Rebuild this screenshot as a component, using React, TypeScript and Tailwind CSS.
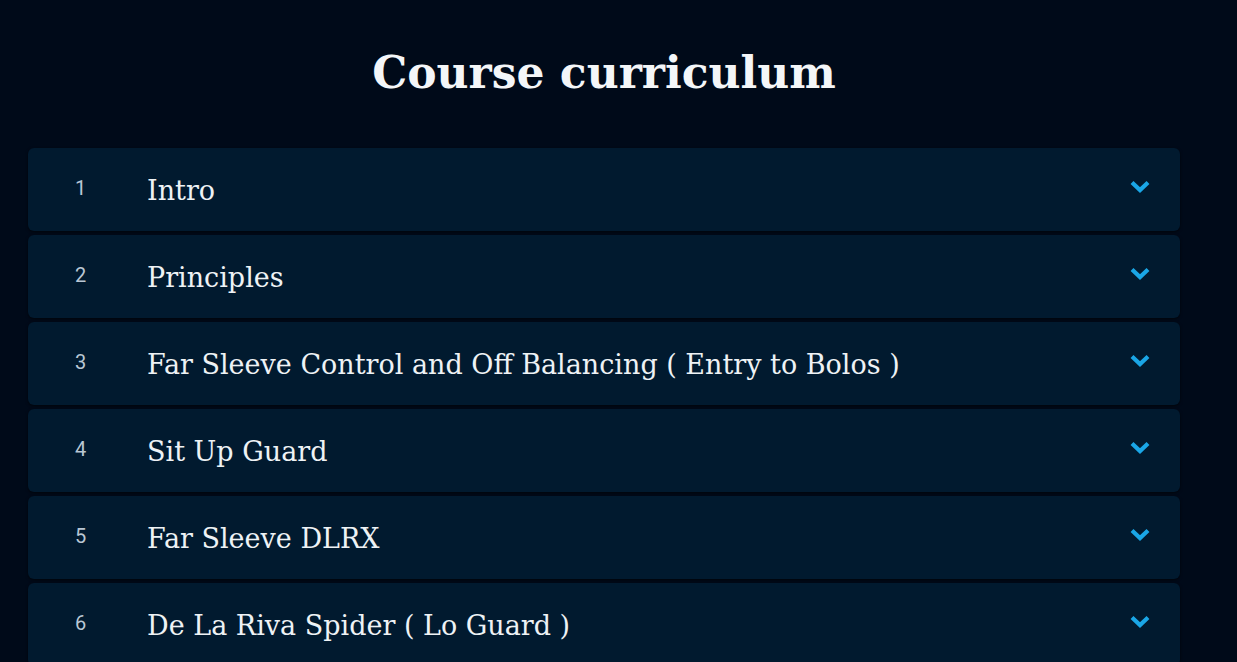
const lessons = [
  "Intro",
  "Principles",
  "Far Sleeve Control and Off Balancing ( Entry to Bolos )",
  "Sit Up Guard",
  "Far Sleeve DLRX",
  "De La Riva Spider ( Lo Guard )",
];

function Chevron() {
  return (
    <svg width="20" height="14" viewBox="0 0 20 14" className="text-[#1aa6e6]">
      <path d="M2 3.5 L10 11 L18 3.5" fill="none" stroke="currentColor" strokeWidth="4.2" strokeLinejoin="miter" />
    </svg>
  );
}

export default function App() {
  return (
    <main className="min-h-screen bg-[#000a19] pb-10 text-white" style={{ fontFamily: '"DejaVu Serif", "Liberation Serif", serif' }}>
      <div className="ml-[28px] w-[1152px]">
        {/* heading */}
        <h1 className="pt-[38px] pb-[41px] text-center text-[44px] font-bold leading-[69px] text-[#f4f6f8]">
          Course curriculum
        </h1>

        {/* lessons */}
        <div className="flex flex-col gap-[4px]">
          {lessons.map((title, i) => (
            <div
              key={title}
              className="flex h-[83px] items-center rounded-[6px] bg-[#011a2f] shadow-[0_1px_3px_rgba(0,0,0,0.6)]"
            >
              <span
                className="w-[119px] pb-[4px] pl-[47px] text-[20px] text-[#b9c7d4]"
                style={{ fontFamily: 'Roboto, "Liberation Sans", sans-serif' }}
              >
                {i + 1}
              </span>
              <span className="flex-1 pt-[3px] text-[27px] text-[#eef2f5]">{title}</span>
              <span className="mr-[30px] mb-[8px] flex">
                <Chevron />
              </span>
            </div>
          ))}
        </div>
      </div>
    </main>
  );
}
